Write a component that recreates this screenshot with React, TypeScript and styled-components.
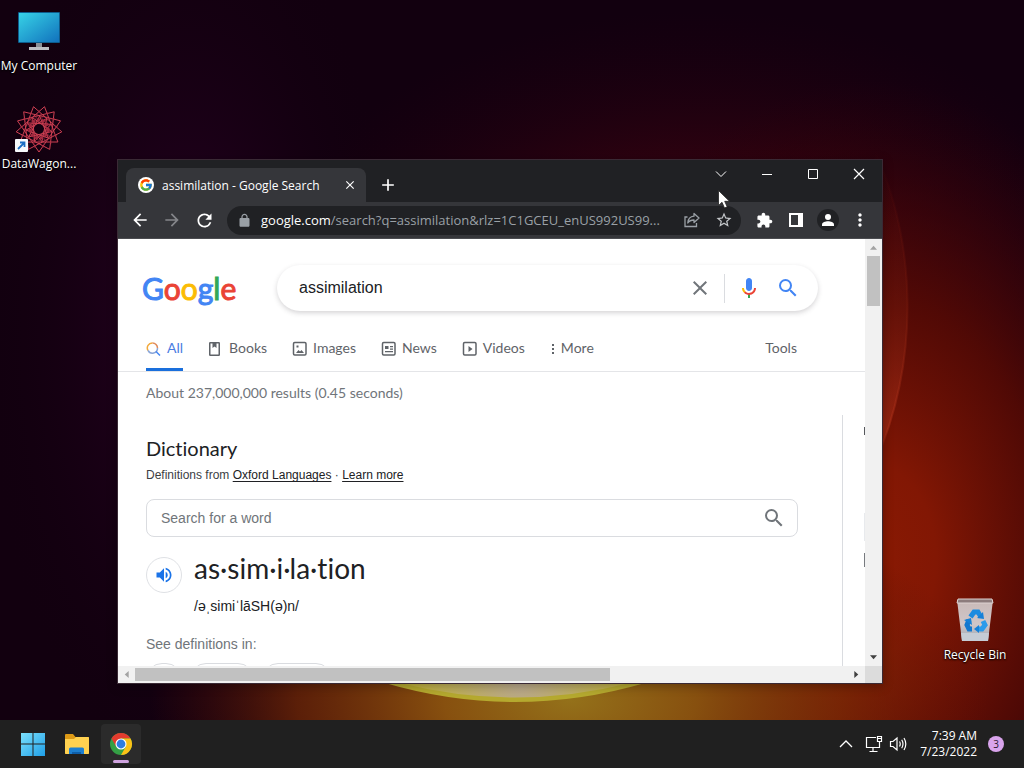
import React from "react";
import styled, { createGlobalStyle } from "styled-components";
import {
  MdArrowBack, MdArrowForward, MdRefresh, MdStarBorder,
  MdMoreVert, MdClose, MdAdd, MdSearch, MdVolumeUp,
} from "react-icons/md";
import { FcGoogle } from "react-icons/fc";

const system = `"Open Sans", "Noto Sans", sans-serif`;
const product = `Lato, "Open Sans", sans-serif`;
const arial = `"Liberation Sans", Arial, sans-serif`;

const GlobalStyle = createGlobalStyle`
  * { box-sizing: border-box; }
  body { margin: 0; font-family: ${system}; font-variant-ligatures: none; }
  button, input { font: inherit; border: 0; padding: 0; margin: 0; background: none; color: inherit; outline: none; }
  a { color: inherit; text-decoration: none; }
  h1, h2, p { margin: 0; font-weight: 400; }
  svg { display: block; flex: none; }
`;

/* ---------- Desktop ---------- */

const Screen = styled.div`
  display: flex;
  flex-direction: column;
  height: 100vh;
  min-height: 480px;
  overflow: hidden;
`;

const Desktop = styled.main`
  position: relative;
  flex: 1;
  overflow: hidden;
  background: #12000f;
`;

const WallpaperArt = styled.svg`
  position: absolute;
  inset: 0;
  width: 100%;
  height: 100%;
`;

const IconColumn = styled.div`
  position: absolute;
  top: 7px;
  left: 0;
  display: flex;
  flex-direction: column;
  gap: 31px;
`;

const BinSpot = styled.div`
  position: absolute;
  right: 10px;
  bottom: 57px;
`;

const Shortcut = styled.button`
  display: flex;
  flex-direction: column;
  align-items: center;
  gap: 3px;
  width: 78px;
  color: #fff;
  font-size: 12px;
  line-height: 16px;
  white-space: nowrap;
  text-shadow: 0 1px 2px #000, 0 0 2px #000;
`;

const Cursor = styled.svg`
  position: absolute;
  top: 189px;
  left: 717px;
`;

/* ---------- Browser window ---------- */

const Window = styled.section`
  position: absolute;
  top: 159px;
  left: 117px;
  right: 141px;
  bottom: 36px;
  display: flex;
  flex-direction: column;
  border: 1px solid #3a2a35;
  background: #202124;
  box-shadow: 0 2px 10px rgba(0, 0, 0, 0.3);
`;

const TitleBar = styled.header`
  display: flex;
  align-items: flex-end;
  height: 42px;
  padding-left: 8px;
  color: #fff;
`;

const BrowserTab = styled.div`
  display: flex;
  align-items: center;
  width: 240px;
  height: 34px;
  padding: 0 9px 0 12px;
  border-radius: 8px 8px 0 0;
  background: #35363a;
  font-size: 12px;
`;

const Favicon = styled.span`
  display: grid;
  place-items: center;
  width: 16px;
  height: 16px;
  margin-right: 8px;
  border-radius: 50%;
  background: #fff;
`;

const TabTitle = styled.span`
  flex: 1;
  white-space: nowrap;
`;

const IconButton = styled.button<{ $size: number; $tone?: string; $fill?: string }>`
  display: grid;
  place-items: center;
  flex: none;
  width: ${(p) => p.$size}px;
  height: ${(p) => p.$size}px;
  border-radius: 50%;
  color: ${(p) => p.$tone ?? "#fff"};
  background: ${(p) => p.$fill ?? "transparent"};
`;

const NewTab = styled(IconButton)`
  margin: 0 0 6px 11px;
`;

const WindowControls = styled.div`
  display: flex;
  align-self: flex-start;
  margin-left: auto;
`;

const Control = styled.button`
  display: grid;
  place-items: center;
  width: 46px;
  height: 28px;
`;

const Toolbar = styled.div`
  display: flex;
  align-items: center;
  height: 37px;
  padding: 0 6px;
  background: #35363a;
  border-bottom: 1px solid #4b4c50;
`;

const AddressBar = styled.div`
  display: flex;
  align-items: center;
  flex: 1;
  min-width: 0;
  height: 29px;
  margin: 0 7px;
  padding: 0 1px 0 10px;
  border-radius: 15px;
  background: #202124;
  color: #9aa0a6;
`;

const Url = styled.span`
  flex: 1;
  min-width: 0;
  margin-left: 9px;
  overflow: hidden;
  font-size: 13px;
  white-space: nowrap;
  b { color: #fff; font-weight: 400; }
`;

/* ---------- Scrollable page ---------- */

const Viewport = styled.div`
  display: grid;
  grid-template: minmax(0, 1fr) 17px / minmax(0, 1fr) 17px;
  flex: 1;
  min-height: 0;
  background: #fff;
`;

const Page = styled.div`
  display: flex;
  flex-direction: column;
  overflow: hidden;
  color: #202124;
`;

const ScrollTrack = styled.div<{ $across?: boolean }>`
  display: flex;
  flex-direction: ${(p) => (p.$across ? "row" : "column")};
  align-items: center;
  background: #f1f1f1;
`;

const ScrollEnd = styled.button<{ $off?: boolean }>`
  display: grid;
  place-items: center;
  width: 17px;
  height: 17px;
  color: ${(p) => (p.$off ? "#a3a3a3" : "#404040")};
`;

const ScrollRun = styled.div<{ $across?: boolean }>`
  display: flex;
  justify-content: ${(p) => (p.$across ? "flex-start" : "center")};
  flex: 1;
  align-self: stretch;
  align-items: ${(p) => (p.$across ? "center" : "flex-start")};
`;

const Thumb = styled.div<{ $across?: boolean }>`
  width: ${(p) => (p.$across ? "calc(100% * 2 / 3)" : "13px")};
  height: ${(p) => (p.$across ? "13px" : "50px")};
  background: #c1c1c1;
`;

const Corner = styled.div`
  background: #dcdcdc;
`;

const SearchHead = styled.div`
  display: flex;
  align-items: center;
  padding: 26px 47px 0 24px;
`;

const Wordmark = styled.a`
  flex: none;
  width: 135px;
  font-family: ${product};
  font-size: 30px;
  line-height: 46px;
  -webkit-text-stroke: 1px;
`;

const Letter = styled.span<{ $ink: string }>`
  color: ${(p) => p.$ink};
`;

const SearchPill = styled.form`
  display: flex;
  align-items: center;
  flex: 1;
  height: 46px;
  padding: 0 7px 0 22px;
  border-radius: 23px;
  box-shadow: 0 2px 5px 0 rgba(64, 60, 67, 0.22);
`;

const QueryInput = styled.input`
  flex: 1;
  min-width: 0;
  font-family: ${arial};
  font-size: 16px;
`;

const Divider = styled.span`
  width: 1px;
  height: 29px;
  margin: 0 8px;
  background: #dadce0;
`;

const TabBar = styled.nav`
  display: flex;
  gap: 25px;
  height: 50px;
  margin-top: 11px;
  padding: 0 68px 0 28px;
  border-bottom: 1px solid #e4e5e8;
  font-family: ${product};
  font-size: 14px;
  color: #5f6368;
`;

const ResultTab = styled.a<{ $active?: boolean }>`
  display: flex;
  align-items: center;
  gap: 5px;
  height: 49px;
  padding-top: 4px;
  border-bottom: 3px solid ${(p) => (p.$active ? "#1a6fdc" : "transparent")};
  color: ${(p) => (p.$active ? "#4a7de2" : "inherit")};
  svg { margin-top: 3px; }
`;

const Tools = styled(ResultTab).attrs({ as: "button" })`
  margin-left: auto;
`;

const Columns = styled.div`
  display: flex;
  flex: 1;
  min-height: 0;
`;

const Results = styled.div`
  flex: 1;
  padding: 11px 44px 0 28px;
`;

const Rail = styled.aside`
  display: flex;
  flex-direction: column;
  align-items: flex-end;
  width: 23px;
  margin-top: 43px;
  padding-top: 12px;
  border-left: 1px solid #dadce0;
`;

const RailSliver = styled.i<{ $gap: number; $tall: number; $ink: string }>`
  width: 1px;
  height: ${(p) => p.$tall}px;
  margin-top: ${(p) => p.$gap}px;
  background: ${(p) => p.$ink};
`;

const Stats = styled.p`
  font-family: ${product};
  font-size: 14px;
  line-height: 20px;
  color: #70757a;
`;

const Heading = styled.h2`
  margin-top: 32px;
  font-family: ${product};
  font-size: 20px;
  line-height: 26px;
`;

const Source = styled.p`
  margin-top: 5px;
  font-family: ${arial};
  font-size: 12px;
  line-height: 18px;
  color: #3c4043;
  a { color: #202124; text-decoration: underline; text-underline-offset: 2px; }
`;

const WordBox = styled.form`
  display: flex;
  align-items: center;
  height: 38px;
  margin-top: 15px;
  padding: 0 11px 0 14px;
  border: 1px solid #dadce0;
  border-radius: 8px;
`;

const WordInput = styled.input`
  flex: 1;
  font-family: ${arial};
  font-size: 14px;
  &::placeholder { color: #70757a; opacity: 1; }
`;

const Entry = styled.div`
  display: flex;
  align-items: flex-start;
  gap: 12px;
  margin-top: 13px;
`;

const Speak = styled.button`
  display: grid;
  place-items: center;
  width: 36px;
  height: 36px;
  margin-top: 7px;
  border: 1px solid #dfe1e5;
  border-radius: 50%;
  color: #1a73e8;
`;

const Headword = styled.h1`
  font-family: ${product};
  font-size: 28px;
  line-height: 36px;
`;

const Phonetic = styled.p`
  margin-top: 10px;
  font-family: ${arial};
  font-size: 14px;
  line-height: 20px;
`;

const Note = styled.p`
  margin-top: 18px;
  font-family: ${arial};
  font-size: 14px;
  line-height: 20px;
  color: #70757a;
`;

const Chips = styled.div`
  display: flex;
  gap: 8px;
  margin-top: 9px;
`;

const Chip = styled.span<{ $wide: number }>`
  width: ${(p) => p.$wide}px;
  height: 32px;
  border: 1px solid #dadce0;
  border-radius: 16px;
`;

/* ---------- Taskbar ---------- */

const Taskbar = styled.footer`
  display: flex;
  align-items: center;
  height: 48px;
  padding: 0 20px 0 13px;
  background: #202020;
  color: #fff;
`;

const AppButton = styled.button<{ $open?: boolean }>`
  display: grid;
  place-items: center;
  position: relative;
  width: 40px;
  height: 40px;
  margin-right: 4px;
  border-radius: 4px;
  background: ${(p) => (p.$open ? "#2b2b2b" : "transparent")};
`;

const OpenMark = styled.span`
  position: absolute;
  bottom: 1px;
  left: 12px;
  width: 16px;
  height: 3px;
  border-radius: 2px;
  background: #cfa3df;
`;

const Tray = styled.div`
  display: flex;
  align-items: center;
  margin-left: auto;
`;

const TrayButton = styled.button<{ $wide?: boolean }>`
  display: grid;
  place-items: center;
  width: ${(p) => (p.$wide ? 32 : 24)}px;
  height: 24px;
`;

const Clock = styled.time`
  width: 67px;
  margin-right: 11px;
  font-size: 12px;
  line-height: 16px;
  text-align: right;
  white-space: nowrap;
`;

const Count = styled.span`
  width: 16px;
  height: 16px;
  border-radius: 50%;
  background: #d9a4ec;
  color: #2a1830;
  font-size: 10px;
  line-height: 16px;
  text-align: center;
`;

/* ---------- Drawings ---------- */

const Wallpaper = () => (
  <WallpaperArt viewBox="0 0 1024 720" preserveAspectRatio="xMidYMid slice" aria-hidden>
    <defs>
      <radialGradient id="purple" gradientUnits="userSpaceOnUse" cx="0" cy="0" r="1" gradientTransform="translate(190 330) scale(210 460)">
        <stop offset="0" stopColor="#2b0026" />
        <stop offset="1" stopColor="#12000f" stopOpacity="0" />
      </radialGradient>
      <radialGradient id="haze" gradientUnits="userSpaceOnUse" cx="0" cy="0" r="1" gradientTransform="translate(700 330) scale(460 320)">
        <stop offset="0" stopColor="#5a0612" />
        <stop offset="0.5" stopColor="#3a0310" stopOpacity="0.75" />
        <stop offset="1" stopColor="#200010" stopOpacity="0" />
      </radialGradient>
      <radialGradient id="red" gradientUnits="userSpaceOnUse" cx="0" cy="0" r="1" gradientTransform="translate(870 560) scale(330 480)">
        <stop offset="0" stopColor="#8a1a03" />
        <stop offset="0.2" stopColor="#821704" />
        <stop offset="0.55" stopColor="#550a04" stopOpacity="0.9" />
        <stop offset="1" stopColor="#300009" stopOpacity="0" />
      </radialGradient>
      <radialGradient id="gold" gradientUnits="userSpaceOnUse" cx="0" cy="0" r="1" gradientTransform="translate(570 700) scale(420 210)">
        <stop offset="0" stopColor="#94711a" />
        <stop offset="0.3" stopColor="#87500f" />
        <stop offset="0.65" stopColor="#7a2c06" stopOpacity="0.7" />
        <stop offset="1" stopColor="#601004" stopOpacity="0" />
      </radialGradient>
      <linearGradient id="rim" gradientUnits="userSpaceOnUse" x1="0" y1="150" x2="0" y2="460">
        <stop offset="0" stopColor="#7a140c" stopOpacity="0" />
        <stop offset="0.5" stopColor="#86200f" stopOpacity="0.5" />
        <stop offset="0.9" stopColor="#b5351c" stopOpacity="0.8" />
        <stop offset="1" stopColor="#b5351c" stopOpacity="0" />
      </linearGradient>
      <radialGradient id="core" gradientUnits="userSpaceOnUse" cx="520" cy="684" r="110">
        <stop offset="0" stopColor="#b9a88c" />
        <stop offset="1" stopColor="#c1b23c" />
      </radialGradient>
    </defs>
    <rect width="1024" height="720" fill="#12000f" />
    <rect width="1024" height="720" fill="url(#purple)" />
    <rect width="1024" height="720" fill="url(#haze)" />
    <rect width="1024" height="720" fill="url(#red)" />
    <rect width="1024" height="720" fill="url(#gold)" />
    <path d="M875 150A393 393 0 0 1 875 463Z" fill="url(#rim)" opacity="0.6" />
    <path d="M875 150A393 393 0 0 1 875 463" fill="none" stroke="url(#rim)" strokeWidth="2" opacity="0.6" />
    <path d="M385 683Q515 721 645 683Z" fill="#b5a92f" />
    <path d="M400 683Q515 712 630 683Z" fill="url(#core)" />
  </WallpaperArt>
);

const Computer = () => (
  <svg width="48" height="48" viewBox="0 0 48 48" aria-hidden>
    <defs>
      <linearGradient id="glass" x1="0" y1="0" x2="1" y2="1">
        <stop offset="0" stopColor="#37d2e6" />
        <stop offset="1" stopColor="#1172bd" />
      </linearGradient>
    </defs>
    <path d="M21 36h6v4h-6z" fill="#8a8f96" />
    <path d="M14 40h20v3H14z" fill="#bcbec3" />
    <rect x="3" y="5" width="42" height="31" rx="1" fill="#0d5c8c" />
    <rect x="4" y="6" width="40" height="29" fill="url(#glass)" />
  </svg>
);

const ring = (count: number, step: number, radius: number, turn: number) =>
  Array.from({ length: count }, (_, i) => {
    const a = ((i * step) / count) * Math.PI * 2 + turn;
    return `${(24 + radius * Math.cos(a)).toFixed(1)},${(24 + radius * Math.sin(a)).toFixed(1)}`;
  }).join(" ");

const Rosette = () => (
  <svg width="48" height="48" viewBox="0 0 48 48" fill="none" stroke="#cf4053" aria-hidden>
    <polygon points={ring(13, 4, 23, 0.12)} strokeWidth="1" />
    <polygon points={ring(13, 5, 19, 0.36)} strokeWidth="0.5" stroke="#8e2438" />
    <polygon points={ring(11, 4, 13, 0.2)} strokeWidth="1" />
    <circle cx="24" cy="24" r="9" strokeWidth="3" strokeDasharray="3 2" stroke="#a32a40" />
    <circle cx="24" cy="24" r="4" fill="#12000f" stroke="none" />
    <rect x="0" y="34" width="13" height="13" rx="1" fill="#f7f9fb" stroke="none" />
    <path d="M3 44l6-6M5 37.500h4.500v4.500" stroke="#1d6fc4" strokeWidth="1.800" />
  </svg>
);

const Bin = () => (
  <svg width="48" height="48" viewBox="0 0 48 48" aria-hidden>
    <defs>
      <linearGradient id="tin" x1="0" y1="0" x2="0" y2="1">
        <stop offset="0" stopColor="#c9b9b7" />
        <stop offset="0.6" stopColor="#cfc6c8" />
        <stop offset="0.85" stopColor="#aeb2ba" />
        <stop offset="1" stopColor="#c4ced6" />
      </linearGradient>
    </defs>
    <path d="M6 4h36l-5 41H11z" fill="url(#tin)" />
    <path d="M7 3h34l1 4H6z" fill="#8d7c7c" stroke="#ddd3d2" strokeWidth="1" />
    <path d="M10 37h28l-1 8H11z" fill="#c5ccd5" />
    <g fill="none" strokeWidth="5">
      <path d="M19.500 21l3.500-5h4l3 5" stroke="#1c8be0" />
      <path d="M32 25l2 4-3 4h-4" stroke="#2a9bea" />
      <path d="M21 33h-3l-2-4 2-5" stroke="#1378cf" />
    </g>
    <path d="M26 22l7 1-1-7zM28 29v8l-5-4zM13 24l7-2 1 7z" fill="#1580d8" />
  </svg>
);

const Padlock = () => (
  <svg width="15" height="15" viewBox="0 0 24 24" fill="currentColor" aria-hidden>
    <path d="M18 8h-1V6c0-2.760-2.240-5-5-5S7 3.240 7 6v2H6c-1.100 0-2 .9-2 2v10c0 1.100.9 2 2 2h12c1.100 0 2-.9 2-2V10c0-1.100-.9-2-2-2zM9 6c0-1.660 1.340-3 3-3s3 1.340 3 3v2H9V6z" />
  </svg>
);

const Puzzle = () => (
  <svg width="17" height="17" viewBox="0 0 24 24" fill="currentColor" aria-hidden>
    <path d="M20.500 11H19V7c0-1.100-.9-2-2-2h-4V3.500C13 2.120 11.880 1 10.500 1S8 2.120 8 3.500V5H4c-1.100 0-1.990.9-1.990 2v3.800H3.500c1.490 0 2.700 1.210 2.700 2.700s-1.210 2.700-2.700 2.700H2V20c0 1.100.9 2 2 2h3.800v-1.500c0-1.490 1.210-2.700 2.700-2.700s2.700 1.210 2.700 2.700V22H17c1.100 0 2-.9 2-2v-4h1.500c1.380 0 2.500-1.120 2.500-2.500S21.880 11 20.500 11z" />
  </svg>
);

const Person = () => (
  <svg width="12" height="12" viewBox="0 0 12 12" fill="currentColor" aria-hidden>
    <circle cx="6" cy="3" r="3" />
    <path d="M0 12v-1.500C0 8.500 3.500 7.300 6 7.300s6 1.200 6 3.200V12z" />
  </svg>
);

const Share = () => (
  <svg width="16" height="16" viewBox="0 0 16 16" fill="none" stroke="#9aa0a6" strokeWidth="1.300" aria-hidden>
    <path d="M3.500 5H1v9.500h11.500V11" />
    <path d="M10 1.500l5 4.500-5 4.500V8C7 8 5 9 3.800 11 4 7 6.500 4.500 10 4.200z" strokeLinejoin="round" />
  </svg>
);

const SidePanel = () => (
  <svg width="14" height="14" viewBox="0 0 14 14" aria-hidden>
    <path d="M0 0h14v14H0zM2 2v10h7V2z" fill="#fff" fillRule="evenodd" />
  </svg>
);

const Mic = () => (
  <svg width="24" height="24" viewBox="0 0 24 24" aria-hidden>
    <path fill="#4285f4" d="M12 15c1.660 0 3-1.310 3-2.970V5.010C15 3.350 13.660 2 12 2S9 3.340 9 5.010v7.020C9 13.690 10.340 15 12 15z" />
    <path fill="#34a853" d="M11 18.080h2V22h-2z" />
    <path fill="#fbbc04" d="M7.050 16.870C5.780 15.540 5 14.040 5 12h2c0 1.450.560 2.420 1.470 3.380v.320l-1.150 1.180z" />
    <path fill="#ea4335" d="M12 16.930a4.970 5.250 0 0 1-3.540-1.550l-1.410 1.490C8.310 18.210 10.070 19 12 19c3.870 0 6.990-2.920 6.990-7H17c0 2.920-2.240 4.930-5 4.930z" />
  </svg>
);

const AllGlyph = () => (
  <svg width="16" height="16" viewBox="0 0 16 16" fill="none" strokeWidth="1.500" aria-hidden>
    <path d="M2 9.500A5 5 0 0 1 6.500 2" stroke="#f2a93b" />
    <path d="M6.500 2A5 5 0 0 1 11.500 7" stroke="#e08a5a" />
    <path d="M11.500 7A5 5 0 0 1 2 9.300" stroke="#8aa6d8" />
    <path d="M10 10.500l4 4" stroke="#4285f4" />
  </svg>
);

const BooksGlyph = () => (
  <svg width="16" height="16" viewBox="0 0 16 16" fill="none" stroke="#5f6368" strokeWidth="1.500" aria-hidden>
    <rect x="1.750" y="1.750" width="9.500" height="12.500" rx="0.500" />
    <path d="M4.500 2h4v5l-2-1.500-2 1.500z" fill="#5f6368" stroke="none" />
  </svg>
);

const Framed = ({ children }: { children: React.ReactNode }) => (
  <svg width="16" height="16" viewBox="0 0 16 16" fill="#5f6368" aria-hidden>
    <rect x="1.500" y="1.500" width="12.500" height="12.500" rx="1.200" fill="none" stroke="#5f6368" strokeWidth="1.500" />
    {children}
  </svg>
);

const ChromeLogo = () => (
  <svg width="24" height="24" viewBox="0 0 24 24" aria-hidden>
    <circle cx="12" cy="12" r="11" fill="#34a045" />
    <path d="M2.470 6.500A11 11 0 0 1 21.530 6.500H12L7.240 14.750z" fill="#e33b2e" />
    <path d="M21.530 6.500A11 11 0 0 1 12 23l4.760-8.250L12 6.500z" fill="#fbc116" />
    <circle cx="12" cy="12" r="5.500" fill="#fff" />
    <circle cx="12" cy="12" r="4.400" fill="#2f7de0" />
  </svg>
);

const StartLogo = () => (
  <svg width="24" height="24" viewBox="0 0 24 24" aria-hidden>
    <defs>
      <linearGradient id="pane" x1="0" y1="0" x2="1" y2="1">
        <stop offset="0" stopColor="#7be0fb" />
        <stop offset="1" stopColor="#1f9fe8" />
      </linearGradient>
    </defs>
    <path d="M0 1h11.500v10.500H0zM12.500 1H24v10.500H12.500zM0 12.500h11.500V24H0zM12.500 12.500H24V24H12.500z" fill="url(#pane)" />
  </svg>
);

const Folder = () => (
  <svg width="26" height="24" viewBox="0 0 26 24" aria-hidden>
    <path d="M1 3q0-1 1-1h7l2.500 3H24q1 0 1 1v15q0 1-1 1H2q-1 0-1-1z" fill="#dd9a16" />
    <path d="M1 7h9l2-2h12q1 0 1 1v15q0 1-1 1H2q-1 0-1-1z" fill="#ffd150" />
    <path d="M5 22v-5q0-1.500 1.500-1.500h12q1.500 0 1.500 1.500v5z" fill="#1d7fd0" />
    <path d="M8 22v-2h9v2z" fill="#0f5ea8" />
  </svg>
);

const Arrow = ({ turn }: { turn: number }) => (
  <svg width="7" height="7" viewBox="-4 -4 8 8" aria-hidden>
    <path d="M-4 2.500L0-2l4 4.500z" fill="currentColor" transform={`rotate(${turn})`} />
  </svg>
);

const wordmark: [string, string][] = [
  ["G", "#4285f4"], ["o", "#ea4335"], ["o", "#fbbc05"],
  ["g", "#4285f4"], ["l", "#34a853"], ["e", "#ea4335"],
];

export default function App() {
  return (
    <Screen>
      <GlobalStyle />
      <Desktop>
        <Wallpaper />
        <IconColumn>
          <Shortcut><Computer />My Computer</Shortcut>
          <Shortcut><Rosette />DataWagon...</Shortcut>
        </IconColumn>
        <BinSpot>
          <Shortcut><Bin />Recycle Bin</Shortcut>
        </BinSpot>

        <Window>
          <TitleBar>
            <BrowserTab>
              <Favicon><FcGoogle size={14} /></Favicon>
              <TabTitle>assimilation - Google Search</TabTitle>
              <IconButton $size={14} aria-label="Close tab"><MdClose size={14} /></IconButton>
            </BrowserTab>
            <NewTab $size={22} aria-label="New tab"><MdAdd size={20} /></NewTab>
            <WindowControls>
              <Control aria-label="Search tabs">
                <svg width="12" height="12" viewBox="0 0 12 12" fill="none" stroke="#fff"><path d="M1 3.500l5 5 5-5" /></svg>
              </Control>
              <Control aria-label="Minimize">
                <svg width="12" height="12" viewBox="0 0 12 12" fill="none" stroke="#fff"><path d="M1 6.500h10" /></svg>
              </Control>
              <Control aria-label="Maximize">
                <svg width="12" height="12" viewBox="0 0 12 12" fill="none" stroke="#fff"><path d="M1.500 1.500h9v9h-9z" /></svg>
              </Control>
              <Control aria-label="Close">
                <svg width="12" height="12" viewBox="0 0 12 12" fill="none" stroke="#fff" strokeWidth="1.200"><path d="M1 1l10 10M11 1L1 11" /></svg>
              </Control>
            </WindowControls>
          </TitleBar>

          <Toolbar>
            <IconButton $size={32} aria-label="Back"><MdArrowBack size={20} /></IconButton>
            <IconButton $size={32} $tone="#85868a" aria-label="Forward"><MdArrowForward size={20} /></IconButton>
            <IconButton $size={32} aria-label="Reload"><MdRefresh size={21} /></IconButton>
            <AddressBar>
              <Padlock />
              <Url><b>google.com</b>/search?q=assimilation&amp;rlz=1C1GCEU_enUS992US99...</Url>
              <IconButton $size={32} aria-label="Share"><Share /></IconButton>
              <IconButton $size={32} $tone="#c4c7ca" aria-label="Bookmark"><MdStarBorder size={18} /></IconButton>
            </AddressBar>
            <IconButton $size={32} aria-label="Extensions"><Puzzle /></IconButton>
            <IconButton $size={32} aria-label="Side panel"><SidePanel /></IconButton>
            <IconButton $size={32} aria-label="Profile">
              <IconButton as="span" $size={22} $fill="#202124"><Person /></IconButton>
            </IconButton>
            <IconButton $size={32} aria-label="Menu"><MdMoreVert size={20} /></IconButton>
          </Toolbar>

          <Viewport>
            <Page>
              <SearchHead>
                <Wordmark href="#home">
                  {wordmark.map(([char, ink], i) => <Letter key={i} $ink={ink}>{char}</Letter>)}
                </Wordmark>
                <SearchPill>
                  <QueryInput aria-label="Search" defaultValue="assimilation" />
                  <IconButton type="button" $size={32} $tone="#70757a" aria-label="Clear"><MdClose size={24} /></IconButton>
                  <Divider />
                  <IconButton type="button" $size={32} aria-label="Search by voice"><Mic /></IconButton>
                  <IconButton $size={46} $tone="#4285f4" aria-label="Search"><MdSearch size={24} /></IconButton>
                </SearchPill>
              </SearchHead>

              <TabBar>
                <ResultTab href="#all" $active><AllGlyph />All</ResultTab>
                <ResultTab href="#books"><BooksGlyph />Books</ResultTab>
                <ResultTab href="#images">
                  <Framed><path d="M4 12l2.500-3 1.500 1.500 1.500-1.500L12 12zM4.500 4.500h2v2h-2z" /></Framed>Images
                </ResultTab>
                <ResultTab href="#news">
                  <Framed><path d="M4 5h3.500v3H4zM9 5h3v1.200H9zM9 7.500h3v1.200H9zM4 10h8v1.200H4z" /></Framed>News
                </ResultTab>
                <ResultTab href="#videos">
                  <Framed><path d="M6.500 5l4 3-4 3z" /></Framed>Videos
                </ResultTab>
                <ResultTab href="#more">
                  <svg width="6" height="12" viewBox="0 0 6 12" fill="#5f6368"><path d="M2 1h2v2H2zM2 5h2v2H2zM2 9h2v2H2z" /></svg>More
                </ResultTab>
                <Tools>Tools</Tools>
              </TabBar>

              <Columns>
                <Results>
                  <Stats>About 237,000,000 results (0.45 seconds)</Stats>
                  <Heading>Dictionary</Heading>
                  <Source>
                    Definitions from <a href="#oxford">Oxford Languages</a> · <a href="#learn">Learn more</a>
                  </Source>
                  <WordBox>
                    <WordInput aria-label="Search for a word" placeholder="Search for a word" />
                    <MdSearch size={24} color="#70757a" />
                  </WordBox>
                  <Entry>
                    <Speak aria-label="Pronounce"><MdVolumeUp size={20} /></Speak>
                    <div>
                      <Headword>as·sim·i·la·tion</Headword>
                      <Phonetic>/əˌsimiˈlāSH(ə)n/</Phonetic>
                    </div>
                  </Entry>
                  <Note>See definitions in:</Note>
                  <Chips aria-hidden>
                    <Chip $wide={36} />
                    <Chip $wide={64} />
                    <Chip $wide={70} />
                  </Chips>
                </Results>
                <Rail aria-hidden>
                  <RailSliver $gap={0} $tall={8} $ink="#55575b" />
                  <RailSliver $gap={78} $tall={28} $ink="#e8eaed" />
                  <RailSliver $gap={12} $tall={14} $ink="#777a7f" />
                </Rail>
              </Columns>
            </Page>
            <ScrollTrack>
              <ScrollEnd $off aria-label="Scroll up"><Arrow turn={0} /></ScrollEnd>
              <ScrollRun><Thumb /></ScrollRun>
              <ScrollEnd aria-label="Scroll down"><Arrow turn={180} /></ScrollEnd>
            </ScrollTrack>
            <ScrollTrack $across>
              <ScrollEnd $off aria-label="Scroll left"><Arrow turn={-90} /></ScrollEnd>
              <ScrollRun $across><Thumb $across /></ScrollRun>
              <ScrollEnd aria-label="Scroll right"><Arrow turn={90} /></ScrollEnd>
            </ScrollTrack>
            <Corner />
          </Viewport>
        </Window>

        <Cursor width="14" height="22" viewBox="0 0 14 22" aria-hidden>
          <path d="M1.500 1.500v15l3.500-3.200 2.500 5.700 2.700-1.200-2.500-5.500h4.800z" fill="#fff" stroke="#222" strokeWidth="0.800" />
        </Cursor>
      </Desktop>

      <Taskbar>
        <AppButton aria-label="Start"><StartLogo /></AppButton>
        <AppButton aria-label="File Explorer"><Folder /></AppButton>
        <AppButton $open aria-label="Chrome"><ChromeLogo /><OpenMark /></AppButton>
        <Tray>
          <TrayButton $wide aria-label="Show hidden icons">
            <svg width="14" height="14" viewBox="0 0 14 14" fill="none" stroke="#fff" strokeWidth="1.300"><path d="M1 10l6-6 6 6" /></svg>
          </TrayButton>
          <TrayButton aria-label="Network">
            <svg width="18" height="18" viewBox="0 0 18 18" fill="none" stroke="#fff" strokeWidth="1.200">
              <path d="M11 2.500H1.500v10h13V9M8 12.500v4M4.500 16.500h8M12.500 1.500h4v5h-4zM14.500 6.500V10M12.500 3.500h4" />
            </svg>
          </TrayButton>
          <TrayButton aria-label="Volume">
            <svg width="18" height="18" viewBox="0 0 18 18" fill="none" stroke="#fff" strokeWidth="1.200">
              <path d="M1.500 6.500h2.500l4-3.500v12l-4-3.500H1.500zM10.500 6.500q1.500 2.500 0 5M12.700 4.800q2.600 4.200 0 8.400M15 3q3.600 6 0 12" />
            </svg>
          </TrayButton>
          <Clock>7:39 AM<br />7/23/2022</Clock>
          <Count>3</Count>
        </Tray>
      </Taskbar>
    </Screen>
  );
}
